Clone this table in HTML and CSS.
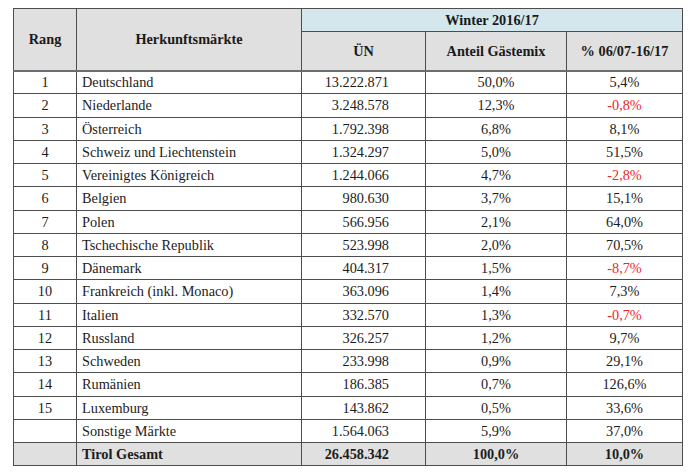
FILE: index.html
```html
<!DOCTYPE html>
<html lang="de">
<head>
<meta charset="utf-8">
<title>Herkunftsmärkte Winter 2016/17</title>
<link rel="stylesheet" href="styles.css">
</head>
<body>
<table class="stats">
  <colgroup>
    <col class="c-rang">
    <col class="c-markt">
    <col class="c-un">
    <col class="c-anteil">
    <col class="c-pct">
  </colgroup>
  <thead>
    <tr class="h1">
      <th rowspan="2" class="hd">Rang</th>
      <th rowspan="2" class="hd">Herkunftsmärkte</th>
      <th colspan="3" class="season">Winter 2016/17</th>
    </tr>
    <tr class="h2">
      <th class="hd">ÜN</th>
      <th class="hd">Anteil Gästemix</th>
      <th class="hd">% 06/07-16/17</th>
    </tr>
  </thead>
  <tbody>
    <tr><td class="rank">1</td><td class="name">Deutschland</td><td class="num">13.222.871</td><td class="pct">50,0%</td><td class="pct">5,4%</td></tr>
    <tr><td class="rank">2</td><td class="name">Niederlande</td><td class="num">3.248.578</td><td class="pct">12,3%</td><td class="pct neg">-0,8%</td></tr>
    <tr><td class="rank">3</td><td class="name">Österreich</td><td class="num">1.792.398</td><td class="pct">6,8%</td><td class="pct">8,1%</td></tr>
    <tr><td class="rank">4</td><td class="name">Schweiz und Liechtenstein</td><td class="num">1.324.297</td><td class="pct">5,0%</td><td class="pct">51,5%</td></tr>
    <tr><td class="rank">5</td><td class="name">Vereinigtes Königreich</td><td class="num">1.244.066</td><td class="pct">4,7%</td><td class="pct neg">-2,8%</td></tr>
    <tr><td class="rank">6</td><td class="name">Belgien</td><td class="num">980.630</td><td class="pct">3,7%</td><td class="pct">15,1%</td></tr>
    <tr><td class="rank">7</td><td class="name">Polen</td><td class="num">566.956</td><td class="pct">2,1%</td><td class="pct">64,0%</td></tr>
    <tr><td class="rank">8</td><td class="name">Tschechische Republik</td><td class="num">523.998</td><td class="pct">2,0%</td><td class="pct">70,5%</td></tr>
    <tr><td class="rank">9</td><td class="name">Dänemark</td><td class="num">404.317</td><td class="pct">1,5%</td><td class="pct neg">-8,7%</td></tr>
    <tr><td class="rank">10</td><td class="name">Frankreich (inkl. Monaco)</td><td class="num">363.096</td><td class="pct">1,4%</td><td class="pct">7,3%</td></tr>
    <tr><td class="rank">11</td><td class="name">Italien</td><td class="num">332.570</td><td class="pct">1,3%</td><td class="pct neg">-0,7%</td></tr>
    <tr><td class="rank">12</td><td class="name">Russland</td><td class="num">326.257</td><td class="pct">1,2%</td><td class="pct">9,7%</td></tr>
    <tr><td class="rank">13</td><td class="name">Schweden</td><td class="num">233.998</td><td class="pct">0,9%</td><td class="pct">29,1%</td></tr>
    <tr><td class="rank">14</td><td class="name">Rumänien</td><td class="num">186.385</td><td class="pct">0,7%</td><td class="pct">126,6%</td></tr>
    <tr><td class="rank">15</td><td class="name">Luxemburg</td><td class="num">143.862</td><td class="pct">0,5%</td><td class="pct">33,6%</td></tr>
    <tr><td class="rank"></td><td class="name">Sonstige Märkte</td><td class="num">1.564.063</td><td class="pct">5,9%</td><td class="pct">37,0%</td></tr>
    <tr class="total"><td class="rank"></td><td class="name">Tirol Gesamt</td><td class="num">26.458.342</td><td class="pct">100,0%</td><td class="pct">10,0%</td></tr>
  </tbody>
</table>
</body>
</html>
```

FILE: styles.css
```css
html, body {
  margin: 0;
  padding: 0;
  background: #ffffff;
}

body {
  font-family: "Liberation Serif", "Times New Roman", serif;
  font-size: 14.3px;
  color: #1c1c1c;
}

.stats {
  margin: 8px 0 0 13px;
  width: 669px;
  table-layout: fixed;
  border-collapse: collapse;
  border: 1px solid #555555;
}

.c-rang { width: 63px; }
.c-markt { width: 225px; }
.c-un { width: 124px; }
.c-anteil { width: 141px; }
.c-pct { width: 116px; }

.stats th,
.stats td {
  border: 1px solid #4d4d4d;
  padding: 0;
  line-height: 16px;
  vertical-align: middle;
  white-space: nowrap;
}

.stats th {
  font-weight: bold;
  text-align: center;
  color: #1a1a1a;
}

.h1 { height: 23px; }
.h2 { height: 39px; }

.hd {
  background: #dfe0df;
}

.season {
  background: #d3e7ec;
}

.h2 th,
.h1 th[rowspan] {
  border-bottom: 2px solid #6d6d6d;
}

.stats tbody tr {
  height: 23.25px;
}

.rank {
  text-align: center;
}

.name {
  text-align: left;
  padding-left: 5px !important;
}

.num {
  text-align: right;
  padding-right: 36px !important;
}

.pct {
  text-align: center;
}

.neg {
  color: #f0262b;
}

.total td {
  background: #dfe0df;
  font-weight: bold;
}
```
